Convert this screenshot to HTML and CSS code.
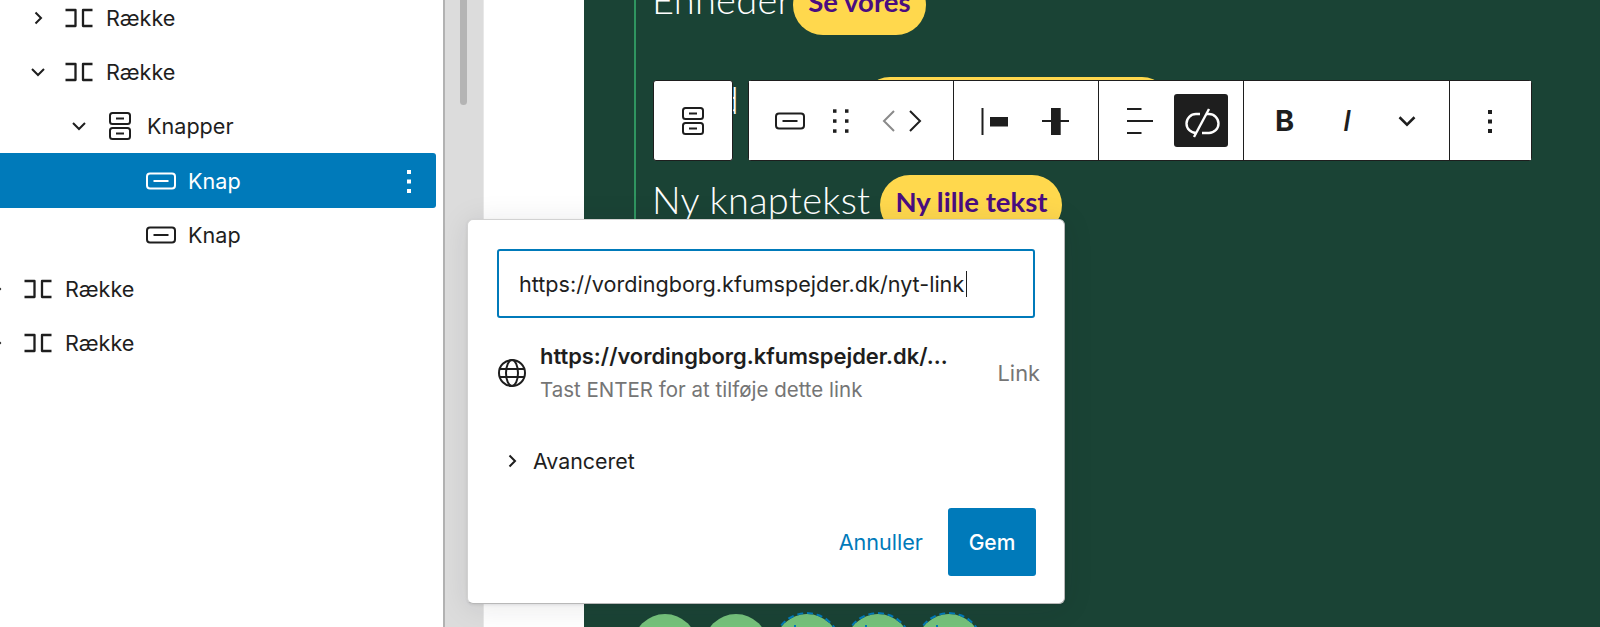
FILE: index.html
```html
<!DOCTYPE html>
<html lang="da">
<head>
<meta charset="utf-8">
<title>Knap link</title>
<link rel="stylesheet" href="styles.css">
</head>
<body>
<svg class="defs" width="0" height="0" aria-hidden="true">
  <defs>
    <g id="i-row" fill="none" stroke="currentColor" stroke-width="2.3" stroke-linejoin="round"><path d="M6.5 12H16.5V28H6.5"/><path d="M33.5 12H24V28H33.5"/></g>
    <g id="i-btn" fill="none" stroke="currentColor" stroke-width="2"><rect x="6" y="12.5" width="28" height="15" rx="3"/><path d="M12.5 20H27.5"/></g>
    <g id="i-btns" fill="none" stroke="currentColor" stroke-width="2"><rect x="10" y="7" width="20" height="11" rx="2.5"/><rect x="10" y="22" width="20" height="11" rx="2.5"/><path d="M16 12.5H24M16 27.5H24"/></g>
    <path id="i-right" fill="none" stroke="currentColor" stroke-width="2" d="M5.5 2.5L11 8L5.5 13.5"/>
    <path id="i-down" fill="none" stroke="currentColor" stroke-width="2" d="M2 5L8 11L14 5"/>
    <g id="i-dots" fill="currentColor"><rect x="18" y="9" width="4" height="4"/><rect x="18" y="18.5" width="4" height="4"/><rect x="18" y="28" width="4" height="4"/></g>
  </defs>
</svg>
<div class="app">
  <aside class="sidebar">
    <ul class="tree">
      <li class="row lvl1"><svg class="chev" viewBox="0 0 16 16"><use href="#i-right"/></svg><svg class="ico" viewBox="0 0 40 40"><use href="#i-row"/></svg><span>Række</span></li>
      <li class="row lvl1"><svg class="chev" viewBox="0 0 16 16"><use href="#i-down"/></svg><svg class="ico" viewBox="0 0 40 40"><use href="#i-row"/></svg><span>Række</span></li>
      <li class="row lvl2"><svg class="chev" viewBox="0 0 16 16"><use href="#i-down"/></svg><svg class="ico" viewBox="0 0 40 40"><use href="#i-btns"/></svg><span>Knapper</span></li>
      <li class="row lvl3 selected"><span class="chev"></span><svg class="ico" viewBox="0 0 40 40"><use href="#i-btn"/></svg><span>Knap</span><svg class="ico more" viewBox="0 0 40 40"><use href="#i-dots"/></svg></li>
      <li class="row lvl3"><span class="chev"></span><svg class="ico" viewBox="0 0 40 40"><use href="#i-btn"/></svg><span>Knap</span></li>
      <li class="row"><svg class="chev" viewBox="0 0 16 16"><use href="#i-right"/></svg><svg class="ico" viewBox="0 0 40 40"><use href="#i-row"/></svg><span>Række</span></li>
      <li class="row"><svg class="chev" viewBox="0 0 16 16"><use href="#i-right"/></svg><svg class="ico" viewBox="0 0 40 40"><use href="#i-row"/></svg><span>Række</span></li>
    </ul>
  </aside>
  <div class="gutter"><div class="thumb"></div></div>
  <div class="margin"></div>
  <main class="canvas">
    <div class="group">
      <div class="line"><span class="big">Enheder</span><span class="pill pill-tight">Se vores</span></div>
      <div class="line"><span class="big">Kund</span><span class="pill pill-blank"></span></div>
      <div class="line"><span class="big">Ny knaptekst</span><span class="pill">Ny lille tekst</span></div>
    </div>
    <div class="circles">
      <span class="circle"></span>
      <span class="circle"></span>
      <span class="circle dashed"></span>
      <span class="circle dashed"></span>
      <span class="circle dashed"></span>
    </div>
  </main>

  <div class="toolbar">
    <div class="tb-group tb-parent">
      <svg class="ico" viewBox="0 0 40 40"><use href="#i-btns"/></svg>
    </div>
    <div class="tb-main">
      <div class="tb-group tb-a">
        <svg class="tb-ico" viewBox="0 0 40 40"><use href="#i-btn"/></svg>
        <svg class="tb-drag" viewBox="0 0 32 32" fill="currentColor"><rect x="8" y="4.3" width="3.5" height="3.5"/><rect x="20" y="4.3" width="3.5" height="3.5"/><rect x="8" y="14.3" width="3.5" height="3.5"/><rect x="20" y="14.3" width="3.5" height="3.5"/><rect x="8" y="24.3" width="3.5" height="3.5"/><rect x="20" y="24.3" width="3.5" height="3.5"/></svg>
        <svg class="tb-mover muted" viewBox="0 0 26 26" fill="none" stroke="currentColor" stroke-width="2"><path d="M18 3L8 13L18 23"/></svg>
        <svg class="tb-mover" viewBox="0 0 26 26" fill="none" stroke="currentColor" stroke-width="2"><path d="M8 3L18 13L8 23"/></svg>
      </div>
      <div class="tb-group tb-b">
        <svg class="tb-ico" viewBox="0 0 40 40" fill="currentColor"><rect x="6.5" y="7" width="2" height="27"/><rect x="15" y="16" width="18" height="9.5"/></svg>
        <svg class="tb-ico" viewBox="0 0 40 40" fill="currentColor"><rect x="7" y="19" width="27" height="2"/><rect x="16" y="7" width="9.7" height="27"/></svg>
      </div>
      <div class="tb-group tb-c">
        <svg class="tb-ico" viewBox="0 0 40 40" fill="currentColor"><rect x="7" y="7" width="14.5" height="2"/><rect x="7" y="19" width="26" height="2"/><rect x="7" y="31" width="14.5" height="2"/></svg>
        <span class="tb-active"><svg class="tb-ico" viewBox="0 0 40 40" fill="none" stroke="currentColor" stroke-width="2.4"><path d="M13 36L28 8"/><path d="M19 13H15A9.5 9.5 0 0 0 15 32H15.5"/><path d="M25 13H28A9.5 9.5 0 0 1 28 32H21"/></svg></span>
      </div>
      <div class="tb-group tb-d">
        <b class="tb-text">B</b>
        <i class="tb-text tb-italic">I</i>
        <svg class="tb-caret" viewBox="0 0 16 16"><use href="#i-down"/></svg>
      </div>
      <div class="tb-group tb-e">
        <svg class="tb-ico" viewBox="0 0 40 40"><use href="#i-dots"/></svg>
      </div>
    </div>
  </div>

  <section class="popover">
    <div class="field"><span>https://vordingborg.kfumspejder.dk/nyt-link</span><span class="caret"></span></div>
    <div class="suggestion">
      <svg class="globe" viewBox="0 0 30 30" fill="none" stroke="currentColor" stroke-width="2"><circle cx="15" cy="15" r="13"/><ellipse cx="15" cy="15" rx="6" ry="13"/><path d="M3 11H27M3 19H27"/></svg>
      <div class="sugg-text">
        <div class="sugg-title">https://vordingborg.kfumspejder.dk/…</div>
        <div class="sugg-sub">Tast ENTER for at tilføje dette link</div>
      </div>
      <span class="sugg-type">Link</span>
    </div>
    <div class="advanced">
      <svg class="adv-chev" viewBox="0 0 16 16"><use href="#i-right"/></svg>
      <span>Avanceret</span>
    </div>
    <div class="actions">
      <span class="btn-link">Annuller</span>
      <span class="btn-primary">Gem</span>
    </div>
  </section>
</div>
</body>
</html>
```
FILE: styles.css
```css
* { box-sizing: border-box; }
html, body { margin: 0; height: 100%; }
body { background: #fff; color: #1e1e1e; font-family: Inter, "Liberation Sans", sans-serif; overflow: hidden; }
.defs { position: absolute; }

.app { position: relative; display: flex; width: 1600px; height: 627px; overflow: hidden; }

/* list view */
.sidebar { flex: 0 0 443px; padding-right: 7px; background: #fff; }
.tree { list-style: none; margin: -9px 0 0 -19px; padding: 0; }
.row { display: flex; align-items: center; height: 54.17px; font-size: 21.6px; color: #1e1e1e; border-radius: 0 3px 3px 0; }
.lvl1 { padding-left: 41px; }
.lvl2 { padding-left: 82px; }
.lvl3 { padding-left: 123px; }
.selected { background: #007aba; color: #fff; }
.chev { flex: 0 0 16px; width: 16px; height: 16px; margin: 0 8px; }
.ico { flex: 0 0 40px; width: 40px; height: 40px; margin: 0 7px 0 5px; }
.more { margin: 0 7px 0 auto; }

.gutter { flex: 0 0 41px; padding-left: 15px; background: #dcdcdc; border-left: 2px solid #b2b2b2; border-right: 1px solid #e8e8e8; }
.thumb { width: 7px; height: 105px; background: #b4b4b4; border-radius: 0 0 4px 4px; }
.margin { flex: 0 0 100px; background: #fff; }

/* canvas */
.canvas { flex: 1; display: flex; flex-direction: column; padding-left: 50px; background: #1a4335; color: #fff; font-family: Lato, sans-serif; }
.group { display: flex; flex-direction: column; gap: 40px; flex: 0 0 625px; margin-top: -25px; padding-left: 16px; border-left: 2px solid #2f9560; }
.line { display: flex; align-items: center; height: 60px; }
.big { padding-bottom: 13px; font-size: 38px; font-weight: 300; letter-spacing: .3px; line-height: 50px; }
.pill { display: inline-flex; align-items: center; height: 60px; margin-left: 10px; padding: 0 15px 8px; background: #ffd84d; color: #4a0d80; border-radius: 30px; font-size: 27.5px; font-weight: 700; }
.pill-tight { margin-left: 2px; }
.pill-blank { align-self: flex-end; width: 310px; height: 58px; margin-left: 122px; }
.circles { display: flex; gap: 7px; margin: 14px 0 0 -1px; }
.circle { position: relative; flex: 0 0 64px; height: 64px; border-radius: 50%; background: #75c27b; }
.dashed { outline: 2px dashed #007aba; }
.dashed::after { content: ""; position: absolute; left: 19px; top: 11px; width: 2px; height: 2px; background: #007aba; }

/* block toolbar */
.toolbar { position: absolute; left: 653px; top: 80px; display: flex; gap: 15px; height: 81px; color: #1e1e1e; }
.tb-main { display: flex; height: 100%; background: #fff; border: 1px solid #1e1e1e; border-radius: 3px; }
.tb-group { display: flex; align-items: center; height: 100%; background: #fff; }
.tb-group + .tb-group { border-left: 1px solid #1e1e1e; }
.tb-parent { justify-content: center; width: 80px; border: 1px solid #1e1e1e; border-radius: 3px; }
.tb-parent .ico { margin: 0; }
.tb-ico { flex: 0 0 40px; width: 40px; height: 40px; }
.tb-a { width: 204px; padding-left: 21px; }
.tb-drag { width: 32px; height: 32px; margin-left: 15px; }
.tb-mover { width: 26px; height: 26px; }
.tb-mover.muted { margin-left: 19px; color: #8a8a8a; }
.tb-b { width: 145px; padding-left: 21px; gap: 20px; }
.tb-c { width: 145px; padding-left: 21px; }
.tb-active { display: flex; align-items: center; justify-content: center; width: 54px; height: 53px; margin-left: 14px; background: #1e1e1e; color: #fff; border-radius: 3px; }
.tb-d { width: 206px; padding-left: 31px; }
.tb-text { width: 18px; font-size: 29px; font-weight: 700; font-style: normal; text-align: center; }
.tb-italic { margin-left: 45px; font-style: italic; font-weight: 500; }
.tb-caret { width: 20px; height: 20px; margin-left: 41px; }
.tb-e { width: 82px; padding-left: 20px; }

/* link popover */
.popover { position: absolute; left: 467px; top: 219px; display: flex; flex-direction: column; width: 598px; height: 385px; padding: 29px 29px 27px 29px; background: #fff; border: 1px solid #d2d2d2; border-right-color: #b8b8b8; border-bottom-color: #b8b8b8; border-radius: 6px; box-shadow: 0 3px 30px rgba(25, 30, 35, .1), 0 1px 3px rgba(25, 30, 35, .1); }
.field { display: flex; align-items: center; height: 69px; padding-left: 20px; border: 2px solid #007aba; border-radius: 3px; font-size: 21.6px; color: #1e1e1e; }
.caret { width: 1px; height: 26px; margin-left: 2px; background: #1e1e1e; }
.suggestion { display: flex; align-items: center; margin-top: 18px; height: 74px; }
.globe { flex: 0 0 30px; width: 30px; height: 30px; }
.sugg-text { flex: 1; margin-left: 13px; }
.sugg-title { font-size: 21.9px; font-weight: 600; line-height: 24px; white-space: nowrap; }
.sugg-sub { margin-top: 10px; font-size: 20.5px; color: #757575; line-height: 24px; white-space: nowrap; }
.sugg-type { margin-right: -5px; font-size: 21.8px; color: #757575; }
.advanced { display: flex; align-items: center; margin-top: 38px; font-size: 21.4px; }
.adv-chev { width: 16px; height: 16px; margin: 0 13px 0 7px; }
.actions { display: flex; align-items: center; justify-content: flex-end; gap: 25px; margin: auto -1px 0 0; }
.btn-link { font-size: 21.6px; color: #007aba; }
.btn-primary { display: flex; align-items: center; justify-content: center; width: 88px; height: 68px; background: #007aba; color: #fff; border-radius: 3px; font-size: 21px; font-weight: 500; }
```
